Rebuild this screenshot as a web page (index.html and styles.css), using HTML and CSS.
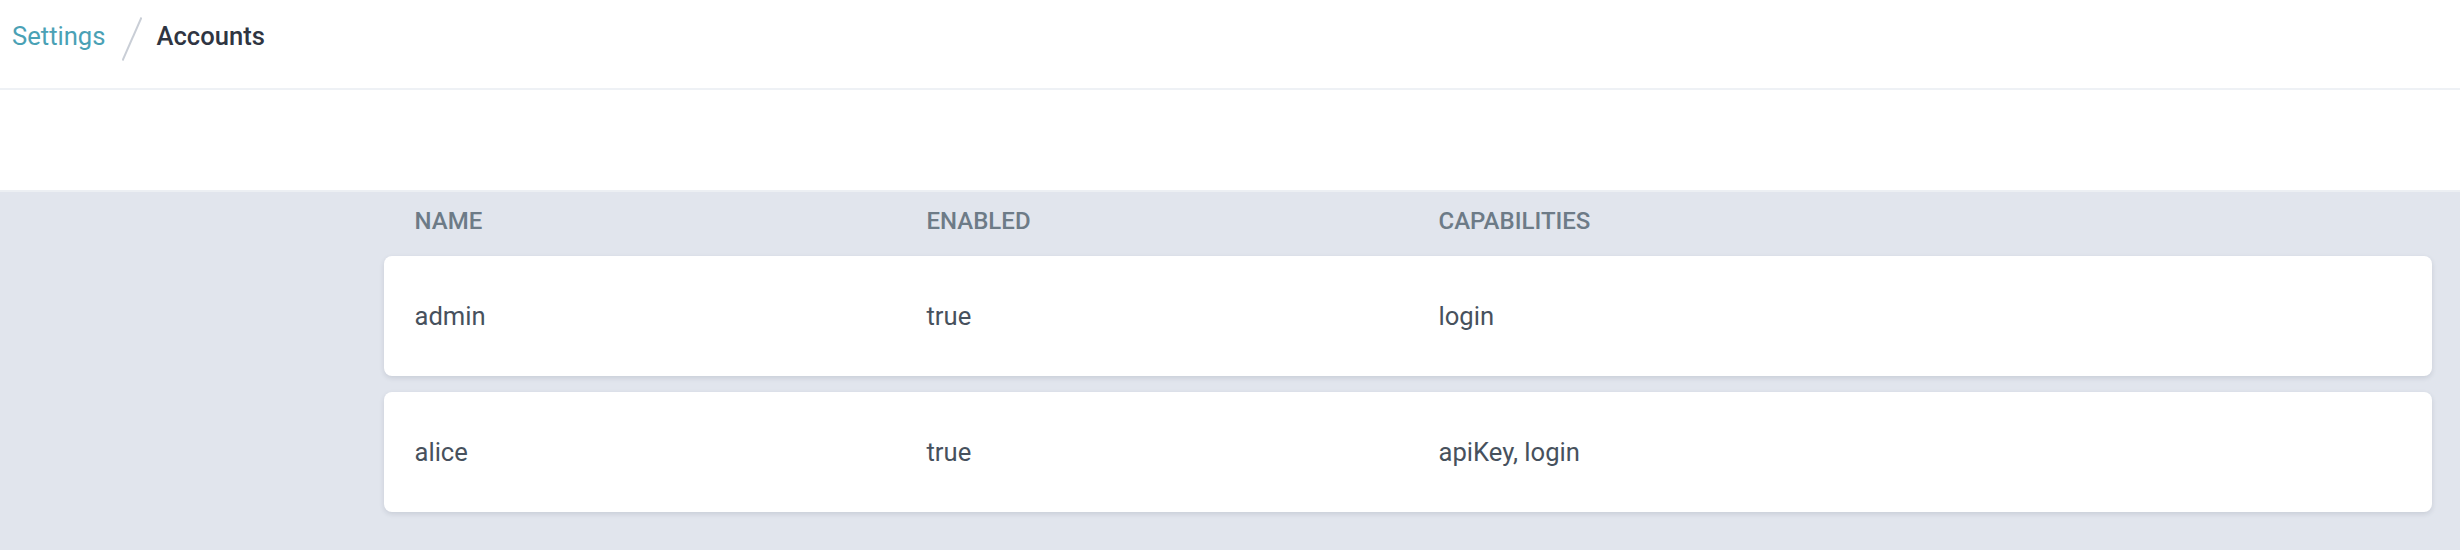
FILE: index.html
```html
<!DOCTYPE html>
<html lang="en">
<head>
<meta charset="utf-8">
<title>Accounts</title>
<link rel="stylesheet" href="styles.css">
</head>
<body>
<header class="topbar">
  <nav class="crumbs">
    <a class="crumb-link" href="#">Settings</a>
    <svg class="crumb-sep" width="20" height="44" viewBox="0 0 20 44" aria-hidden="true">
      <line x1="19.5" y1="0.5" x2="0.5" y2="43.5" stroke="#c9ced6" stroke-width="2"/>
    </svg>
    <span class="crumb-current">Accounts</span>
  </nav>
</header>
<div class="toolbar"></div>
<main class="content">
  <div class="table">
    <div class="thead">
      <div class="th">Name</div>
      <div class="th">Enabled</div>
      <div class="th">Capabilities</div>
      <div class="th"></div>
    </div>
    <div class="row">
      <div class="td">admin</div>
      <div class="td">true</div>
      <div class="td">login</div>
      <div class="td"></div>
    </div>
    <div class="row">
      <div class="td">alice</div>
      <div class="td">true</div>
      <div class="td">apiKey, login</div>
      <div class="td"></div>
    </div>
  </div>
</main>
</body>
</html>
```
FILE: styles.css
```css
html, body {
  margin: 0;
  padding: 0;
  background: #e1e5ed;
  font-family: Roboto, "Liberation Sans", Arial, sans-serif;
}

.topbar {
  background: #ffffff;
  height: 88px;
  border-bottom: 2px solid #eef1f5;
  box-sizing: content-box;
}

.crumbs {
  display: flex;
  align-items: flex-start;
  padding: 17px 0 0 12px;
  font-size: 25.6px;
  line-height: 38.4px;
}

.crumb-link {
  color: #4aa1b5;
  text-decoration: none;
}

.crumb-sep {
  display: block;
  margin: 0 14px 0 17px;
  flex: none;
}

.crumb-current {
  color: #2f3542;
  font-weight: 500;
}

.toolbar {
  background: #ffffff;
  height: 100px;
}

.content {
  border-top: 2px solid #eceff3;
  padding: 0 28px 38px 384px;
}

.thead {
  display: grid;
  grid-template-columns: repeat(4, 1fr);
  padding: 11px 0 17px;
}

.th {
  padding-left: 30.5px;
  font-size: 24px;
  line-height: 36px;
  font-weight: 500;
  text-transform: uppercase;
  color: #6d7b87;
}

.row {
  display: grid;
  grid-template-columns: repeat(4, 1fr);
  align-items: center;
  height: 120px;
  background: #ffffff;
  border-radius: 8px;
  box-shadow: 0 2px 5px rgba(40, 50, 70, 0.13);
  margin-bottom: 16px;
}

.td {
  padding-left: 30.5px;
  font-size: 25.6px;
  line-height: 38.4px;
  color: #47515d;
}
```
